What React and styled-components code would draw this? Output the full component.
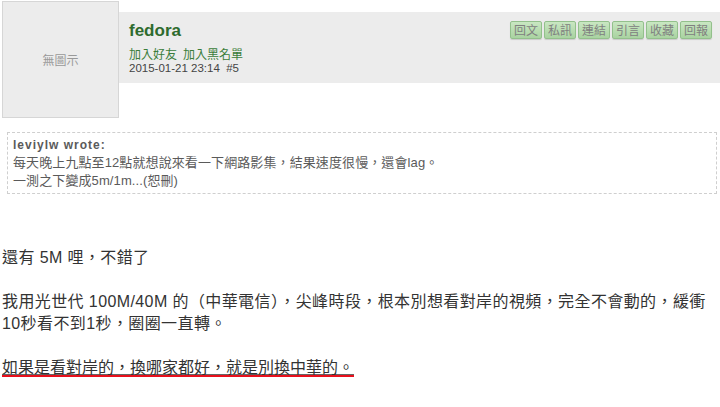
import React from "react";
import styled, { createGlobalStyle } from "styled-components";

const GlobalStyle = createGlobalStyle`
  body {
    margin: 0;
    background: #fff;
    font-family: "Liberation Sans", Arial, "Noto Sans CJK TC", sans-serif;
  }
`;

const buttons = ["回文", "私訊", "連結", "引言", "收藏", "回報"];

const App = () => (
  <Page>
    <GlobalStyle />
    <PostHead>
      <Avatar>無圖示</Avatar>
      <InfoBar>
        <Who>
          <Name>fedora</Name>
          <Links>
            <a>加入好友</a>
            <a>加入黑名單</a>
          </Links>
          <Stamp>2015-01-21 23:14&nbsp;&nbsp;#5</Stamp>
        </Who>
        <Tools>
          {buttons.map((b) => (
            <ToolButton key={b}>{b}</ToolButton>
          ))}
        </Tools>
      </InfoBar>
    </PostHead>

    <Quote>
      <QuoteBy>leviylw wrote:</QuoteBy>
      <QuoteLine>每天晚上九點至12點就想說來看一下網路影集，結果速度很慢，還會lag。</QuoteLine>
      <QuoteLine>一測之下變成5m/1m...(恕刪)</QuoteLine>
    </Quote>

    <Body>
      還有 5M 哩，不錯了
      <br />
      <br />
      我用光世代 100M/40M 的（中華電信），尖峰時段，根本別想看對岸的視頻，完全不會動的，緩衝10秒看不到1秒，圈圈一直轉。
      <br />
      <br />
      <Marked>如果是看對岸的，換哪家都好，就是別換中華的。</Marked>
    </Body>
  </Page>
);

const Page = styled.div`
  width: 718px;
  padding: 1px 0 0 2px;
`;

const PostHead = styled.div`
  display: flex;
  align-items: flex-start;
`;

const Avatar = styled.div`
  width: 115px;
  height: 115px;
  flex: none;
  display: flex;
  align-items: center;
  justify-content: center;
  background: #ececec;
  border: 1px solid #d6d6d6;
  color: #999;
  font-size: 12px;
  font-family: "Noto Sans CJK TC", sans-serif;
`;

const InfoBar = styled.div`
  flex: 1;
  margin-top: 11px;
  height: 71px;
  box-sizing: border-box;
  padding: 9px 8px 0 10px;
  background: #ececec;
  display: flex;
  justify-content: space-between;
  align-items: flex-start;
`;

const Who = styled.div`
  display: flex;
  flex-direction: column;
`;

const Name = styled.div`
  font-size: 17px;
  font-weight: bold;
  color: #2e6b2e;
  line-height: 20px;
  margin-bottom: 5px;
`;

const Links = styled.div`
  display: flex;
  gap: 6px;
  font-size: 12px;
  line-height: 15px;

  a {
    color: #3a7d3a;
    font-family: "Noto Sans CJK TC", sans-serif;
    cursor: pointer;
  }
`;

const Stamp = styled.div`
  font-size: 11.5px;
  line-height: 15px;
  color: #444;
`;

const Tools = styled.div`
  display: flex;
  gap: 2px;
`;

const ToolButton = styled.button`
  width: 32px;
  height: 18px;
  padding: 0;
  border: 1px solid #93c08c;
  border-radius: 2px;
  background: linear-gradient(#c9e7c2, #a9d3a1);
  box-shadow: 0 1px 1px rgba(0, 0, 0, 0.15);
  color: #808080;
  font-size: 12px;
  line-height: 16px;
  font-family: "Noto Sans CJK TC", sans-serif;
`;

const Quote = styled.div`
  margin: 14px 3px 0 5px;
  padding: 3px 5px 3px 5px;
  border: 1px dashed #cfcfcf;
  color: #5a5a5a;
  font-size: 13px;
  line-height: 18px;
  letter-spacing: 0.1px;
`;

const QuoteBy = styled.div`
  font-weight: bold;
  font-size: 12px;
  letter-spacing: 1px;
`;

const QuoteLine = styled.div``;

const Body = styled.div`
  margin-top: 53px;
  width: 712px;
  font-size: 16px;
  line-height: 22px;
  letter-spacing: 0.4px;
  color: #333;
`;

const Marked = styled.span`
  letter-spacing: 0;
  text-decoration: underline;
  text-decoration-color: #666;
  text-underline-offset: 1px;
  padding-bottom: 1px;
  background: linear-gradient(#e8101c, #e8101c) no-repeat;
  background-size: 100% 3px;
  background-position: 0 100%;
`;

export default App;
